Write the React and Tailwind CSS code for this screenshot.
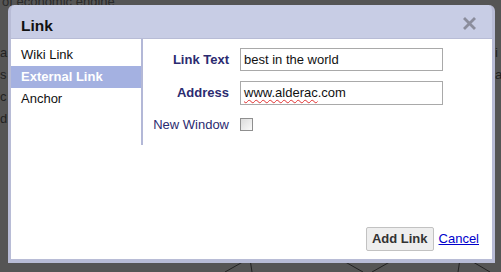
import React from "react";

const font = { fontFamily: '"Liberation Sans", Arial, sans-serif' };

const NavItem = ({ label, active }) => (
  <div
    className={`flex h-[22px] items-center pl-[10px] text-[13px] ${
      active ? "bg-[#a4b1e1] font-bold text-white" : "text-[#111]"
    }`}
  >
    {label}
  </div>
);

const FieldRow = ({ label, bold, children }) => (
  <div className="flex items-center gap-[11px]">
    <div
      className={`w-[86px] whitespace-nowrap text-right text-[13px] text-[#2b2b70] ${
        bold ? "font-bold" : ""
      }`}
    >
      {label}
    </div>
    {children}
  </div>
);

export default function App() {
  return (
    <div
      className="relative h-[272px] w-[501px] overflow-hidden bg-[#555555]"
      style={font}
    >
      {/* page behind the overlay */}
      <div className="absolute left-[2px] top-[-6px] text-[13px] leading-[15px] text-[#2a2a2a]">
        of economic engine
      </div>
      <div className="absolute left-0 top-[42px] flex flex-col text-[13px] leading-[22px] text-[#222]">
        <span>a</span>
        <span>s</span>
        <span>c</span>
        <span>d</span>
      </div>
      <div className="absolute left-[495px] top-[42px] flex flex-col text-[13px] leading-[22px] text-[#222]">
        <span>i</span>
        <span>a</span>
      </div>
      <svg
        className="absolute left-0 top-[255px]"
        width="501"
        height="17"
        viewBox="0 0 501 17"
      >
        <path
          d="M225 17 L248 4 M250 4 L252 17 M340 4 L363 17 M372 17 L395 4 M460 4 L458 17 M468 4 L490 17"
          stroke="#222"
          strokeWidth="1"
          fill="none"
        />
      </svg>

      {/* dialog */}
      <div className="relative ml-[8px] mt-[5px] flex h-[258px] w-[487px] flex-col rounded-t-[6px] border-x-[3px] border-b-[4px] border-[#b8bcd6] bg-[#c8cde5]">
        <div className="flex h-[33px] items-end justify-between pb-[3px] pl-[10px] pr-[16px]">
          <span className="text-[15.5px] font-bold leading-[18px] text-[#111]">
            Link
          </span>
          <svg className="mb-[5px]" width="13" height="13" viewBox="0 0 13 13">
            <path
              d="M2 2 L11 11 M11 2 L2 11"
              stroke="#8b8d9c"
              strokeWidth="2.8"
              strokeLinecap="square"
            />
          </svg>
        </div>
        <div className="flex flex-1 border-t border-[#b8bcd6] bg-white">
          <div className="flex h-[106px] w-[132px] flex-col border-r-2 border-[#b3b8d7] pt-[5px]">
            <NavItem label="Wiki Link" />
            <NavItem label="External Link" active />
            <NavItem label="Anchor" />
          </div>
          <div className="flex flex-1 flex-col pt-[9px]">
            <div className="flex flex-col gap-[10px]">
              <FieldRow label="Link Text" bold>
                <div className="flex h-[23px] w-[203px] items-center border border-[#a9a9a9] pl-[3px] text-[13px] text-[#111]">
                  best in the world
                </div>
              </FieldRow>
              <FieldRow label="Address" bold>
                <div className="flex h-[24px] w-[203px] items-center border border-[#a9a9a9] pl-[3px] text-[13px] text-[#111]">
                  <span className="underline decoration-wavy decoration-[#e03030] decoration-1 underline-offset-2">
                    www.alderac
                  </span>
                  .com
                </div>
              </FieldRow>
              <FieldRow label="New Window">
                <div className="h-[13px] w-[13px] border border-[#8f8f8f] bg-gradient-to-br from-[#dcdcdc] to-[#fafafa]" />
              </FieldRow>
            </div>
            <div className="mt-auto flex items-center justify-end gap-[5px] pb-[8px] pr-[13px]">
              <button className="h-[24px] rounded-[2px] border border-[#c2c2c2] bg-[#eeeeee] px-[5px] text-[13px] font-bold text-[#333]">
                Add Link
              </button>
              <a href="#" className="text-[13px] text-[#0000cc] underline">
                Cancel
              </a>
            </div>
          </div>
        </div>
      </div>
    </div>
  );
}
